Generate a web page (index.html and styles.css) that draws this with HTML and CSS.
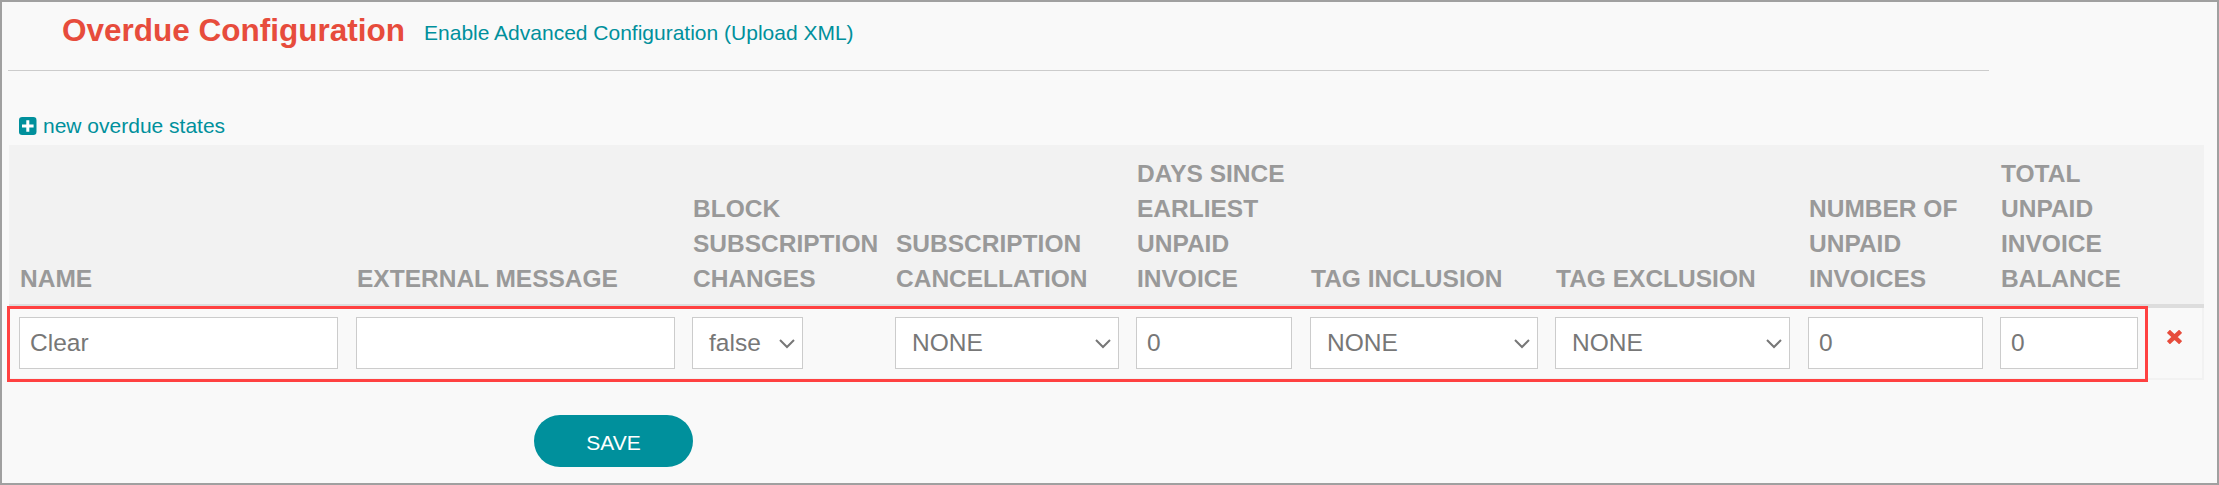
FILE: index.html
```html
<!DOCTYPE html>
<html lang="en">
<head>
<meta charset="utf-8">
<title>Overdue Configuration</title>
<link rel="stylesheet" href="styles.css">
</head>
<body>
<main class="page">
  <header class="page-header">
    <h1 class="title">Overdue Configuration</h1>
    <a class="link advanced" href="#">Enable Advanced Configuration (Upload XML)</a>
  </header>
  <a class="link add-link" href="#">
    <svg class="add-icon" width="18" height="18" viewBox="0 0 18 18"><rect width="17.5" height="18" rx="3.2" fill="#00909c"/><path d="M8.8 3.2v11.6M3 9h11.6" stroke="#fff" stroke-width="3"/></svg>
    <span>new overdue states</span>
  </a>
  <section class="states">
    <div class="row head">
      <div class="cell">Name</div>
      <div class="cell">External Message</div>
      <div class="cell">Block Subscription Changes</div>
      <div class="cell">Subscription Cancellation</div>
      <div class="cell">Days Since Earliest Unpaid Invoice</div>
      <div class="cell">Tag Inclusion</div>
      <div class="cell">Tag Exclusion</div>
      <div class="cell">Number of Unpaid Invoices</div>
      <div class="cell">Total Unpaid Invoice Balance</div>
      <div class="cell"></div>
    </div>
    <div class="row body">
      <div class="cell tight"><div class="field">Clear</div></div>
      <div class="cell"><div class="field"></div></div>
      <div class="cell"><div class="field select short">false<svg class="chevron" width="16" height="10" viewBox="0 0 16 10"><path d="M1 1l7 7 7-7"/></svg></div></div>
      <div class="cell"><div class="field select">NONE<svg class="chevron" width="16" height="10" viewBox="0 0 16 10"><path d="M1 1l7 7 7-7"/></svg></div></div>
      <div class="cell tight"><div class="field">0</div></div>
      <div class="cell"><div class="field select">NONE<svg class="chevron" width="16" height="10" viewBox="0 0 16 10"><path d="M1 1l7 7 7-7"/></svg></div></div>
      <div class="cell tight"><div class="field select">NONE<svg class="chevron" width="16" height="10" viewBox="0 0 16 10"><path d="M1 1l7 7 7-7"/></svg></div></div>
      <div class="cell"><div class="field">0</div></div>
      <div class="cell"><div class="field">0</div></div>
      <div class="cell remove"><svg width="15" height="14" viewBox="0 0 15 14"><path d="M3 2.8l9 8.4M12 2.8l-9 8.4" stroke="#e74c3c" stroke-width="4.4" stroke-linecap="square"/></svg></div>
    </div>
    <div class="highlight"></div>
  </section>
  <button class="save" type="button">SAVE</button>
</main>
</body>
</html>
```
FILE: styles.css
```css
* { box-sizing: border-box; }
body { margin: 0; font-family: "Liberation Sans", Arial, sans-serif; }
.page {
  width: 2219px;
  height: 485px;
  border: 2px solid #a0a0a0;
  background: #f9f9f9;
  padding-left: 6px;
  overflow: hidden;
}
.page-header {
  display: flex;
  align-items: flex-start;
  gap: 19px;
  width: 1981px;
  height: 69px;
  padding: 10px 0 0 54px;
  border-bottom: 1px solid #ccc;
}
.title { margin: 0; font-size: 31.5px; line-height: 36px; color: #e74c3c; }
.link { font-size: 21px; line-height: 30px; color: #00909c; text-decoration: none; }
.advanced { padding-top: 6px; }
.add-link { display: flex; align-items: center; gap: 6px; width: max-content; margin: 40px 0 0 11px; }
.states { position: relative; width: 2195px; margin: 4px 0 0 1px; }
.row { display: grid; grid-template-columns: 337px 336px 203px 241px 174px 245px 253px 192px 155px 1fr; padding-left: 10px; }
.cell { padding-right: 17px; }
.tight { padding-right: 18px; }
.head {
  height: 163px;
  align-items: end;
  padding-bottom: 8px;
  border-bottom: 4px solid #ddd;
  background: #f2f2f2;
  color: #999;
  font-size: 24.5px;
  font-weight: bold;
  line-height: 35px;
  text-transform: uppercase;
}
.head .cell { padding: 0 16px 0 1px; }
.body { height: 72px; padding-top: 9px; border-right: 2px solid #f2f2f2; border-bottom: 2px solid #f2f2f2; }
.field {
  display: flex;
  align-items: center;
  height: 52px;
  padding: 0 8px 0 10px;
  border: 1px solid #ccc;
  background: #fff;
  color: #777;
  font-size: 24.5px;
}
.select { justify-content: space-between; padding-left: 16px; padding-right: 7px; }
.short { width: 111px; }
.chevron { margin-top: 2px; fill: none; stroke: #777; stroke-width: 2; }
.remove { padding: 13px 0 0 12px; }
.remove svg { display: block; }
.highlight { position: absolute; left: -2px; top: 161px; width: 2141px; height: 76px; border: 3px solid #ff4141; }
.save {
  display: block;
  width: 159px;
  height: 52px;
  margin: 35px 0 0 526px;
  padding: 3px 0 0;
  border: 0;
  border-radius: 26px;
  background: #00909c;
  color: #fff;
  font: 21px "Liberation Sans", Arial, sans-serif;
}
```
